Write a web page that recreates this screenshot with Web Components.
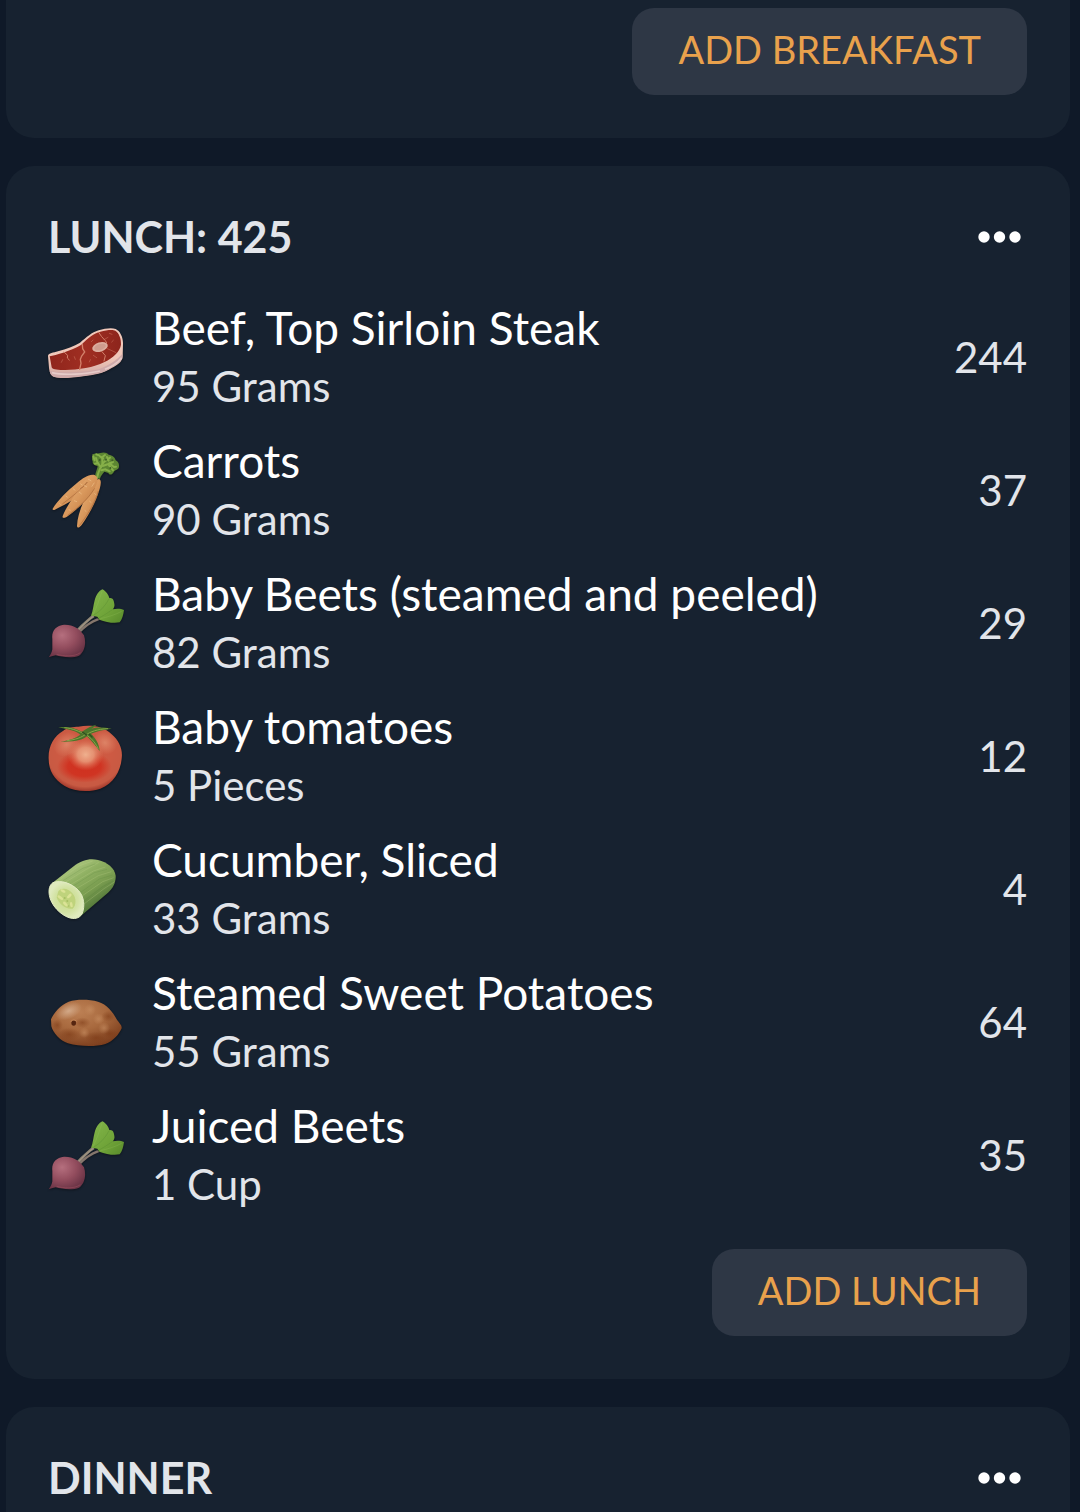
<!DOCTYPE html>
<html lang="en">
<head>
<meta charset="utf-8">
<meta name="viewport" content="width=device-width, initial-scale=1">
<title>Food diary</title>
<style>
    :root {
        --page: #0f1928;
        --card: #172230;
        --button: #2e3745;
        --accent: #e9a14c;
        --text: #ffffff;
        --text-soft: #e2e5ea;
    }
    body {
        margin: 0;
        padding: 0 10px 0 6px;
        background: var(--page);
        color: var(--text);
        font-family: Lato, "Open Sans", sans-serif;
        display: flex;
        flex-direction: column;
        gap: 28px;
    }
</style>
</head>
<body>

<meal-card continued>
    <add-button slot="action">ADD BREAKFAST</add-button>
</meal-card>

<meal-card>
    <span slot="title">LUNCH: 425</span>
    <food-item icon="steak" calories="244">Beef, Top Sirloin Steak<span slot="amount">95 Grams</span></food-item>
    <food-item icon="carrots" calories="37">Carrots<span slot="amount">90 Grams</span></food-item>
    <food-item icon="beet" calories="29">Baby Beets (steamed and peeled)<span slot="amount">82 Grams</span></food-item>
    <food-item icon="tomato" calories="12">Baby tomatoes<span slot="amount">5 Pieces</span></food-item>
    <food-item icon="cucumber" calories="4">Cucumber, Sliced<span slot="amount">33 Grams</span></food-item>
    <food-item icon="potato" calories="64">Steamed Sweet Potatoes<span slot="amount">55 Grams</span></food-item>
    <food-item icon="beet" calories="35">Juiced Beets<span slot="amount">1 Cup</span></food-item>
    <add-button slot="action">ADD LUNCH</add-button>
</meal-card>

<meal-card>
    <span slot="title">DINNER</span>
</meal-card>

<script>
/* ---------- Food drawings, one svg per icon name ---------- */
const icons = {
    steak: `
        <svg viewBox="54 27 228 228">
            <defs>
                <linearGradient id="fat" x1="0" y1="0" x2="0" y2="1"><stop offset=".6" stop-color="#f0c8ba"/><stop offset="1" stop-color="#cfa5a0"/></linearGradient>
                <linearGradient id="meat" x1="0" y1="0" x2="1" y2="0"><stop offset="0" stop-color="#8f251c"/><stop offset=".5" stop-color="#a02e22"/><stop offset="1" stop-color="#8d251c"/></linearGradient>
            </defs>
            <path d="M54 137 C56 130 70 128 84 124 C110 116 132 109 150 98 C170 82 185 67 206 61 C225 55 246 53 257 57 C270 63 280 82 279 102 L278 140 C276 156 262 165 245 174 C222 190 190 195 160 199 C125 204 90 207 73 201 C62 197 59 188 57 174 Z" fill="url(#fat)"/>
            <path d="M59 182 C90 190 165 187 205 178 C235 167 262 150 277 131 L277 144 C270 160 247 170 226 184 C190 197 100 207 76 201 C63 198 60 190 59 182 Z" fill="#d0abab"/>
            <path d="M66 188 C100 197 170 192 210 183 M225 178 C245 170 265 156 275 143" fill="none" stroke="#e6cbc8" stroke-width="5"/>
            <path d="M59 139 C76 135 124 123 154 104 C175 84 191 69 211 65 C230 60 248 58 256 62 C267 69 274 86 273 104 C270 125 249 144 222 157 C192 173 137 181 99 180 C78 180 67 178 65 172 Z" fill="url(#meat)"/>
            <g fill="none" stroke="#d3806a" stroke-linecap="round">
                <path d="M102 126 L113 136 L112 144 L118 150" stroke-width="3"/>
                <path d="M157 104 L158 116 L164 126 L155 138 L151 148 L153 160 L149 178" stroke-width="4"/>
                <path d="M206 67 L215 80 L226 92 L230 98 M216 125 L226 137 L222 153" stroke-width="3"/>
                <path d="M232 116 L250 124 L258 128 M222 89 L234 82 M94 157 L98 149 M178 156 L181 149 M190 136 L200 143 M184 95 L189 90 M133 140 L136 148 M238 70 L246 73 M245 96 L250 91" stroke-width="2" opacity=".7"/>
            </g>
            <ellipse cx="210" cy="111" rx="24" ry="14" transform="rotate(-16 210 111)" fill="#dcae9f"/>
            <ellipse cx="210" cy="111" rx="18" ry="9" transform="rotate(-16 210 111)" fill="#cf9d8f"/>
        </svg>`,
    carrots: `
        <svg viewBox="54 36 228 228">
            <defs>
                <linearGradient id="root" x1="0" y1="0" x2="1" y2="1"><stop offset="0" stop-color="#ecb981"/><stop offset=".5" stop-color="#d9985c"/><stop offset="1" stop-color="#b06a36"/></linearGradient>
            </defs>
            <path d="M196 115 C194 100 201 91 203 79 C194 76 187 73 188 64 C183 57 188 50 187 43 C195 38 204 42 211 39 C220 36 231 37 236 44 C247 45 256 53 257 61 C267 66 269 77 266 84 C262 91 254 89 250 98 C244 106 238 105 235 99 L223 95 C217 102 212 108 210 116 Z" fill="#5c8632"/>
            <g fill="none" stroke="#86b049" stroke-width="6" stroke-linecap="round">
                <path d="M201 114 C205 96 211 79 223 65 L240 53"/>
                <path d="M213 82 L202 67 L198 54 M217 72 L217 51 L225 45 M218 78 L235 72 L249 66 M214 91 L226 88 L239 94"/>
                <path d="M194 61 L190 49 M204 70 L195 71 M207 46 L199 43 M219 55 L210 49 M236 62 L231 51 M238 70 L252 81 L258 80 M237 76 L249 91"/>
            </g>
            <g fill="#3f5f27"><circle cx="209" cy="60" r="3"/><circle cx="228" cy="59" r="3"/><circle cx="241" cy="84" r="3"/><circle cx="247" cy="61" r="3"/></g>
            <path d="M187 104 C173 105 158 114 141 129 C113 151 83 182 68 206 C66 211 73 211 80 206 C111 192 145 171 169 145 C183 128 200 109 187 104 Z" fill="url(#root)"/>
            <path d="M207 117 C193 118 184 137 171 163 C156 194 142 226 141 258 C142 266 149 263 155 255 C172 231 193 195 203 166 C210 145 218 121 207 117 Z" fill="url(#root)"/>
            <path d="M186 106 C170 109 154 135 139 158 C124 179 106 207 98 228 C96 236 104 235 113 229 C143 207 174 179 191 151 C202 131 207 115 197 107 C193 104 190 104 186 106 Z" fill="url(#root)"/>
            <path d="M150 146 C160 142 166 134 172 126 C151 151 121 174 97 192 M194 145 C173 179 142 205 113 226 M205 153 C196 186 171 228 148 257" fill="none" stroke="#8e4e25" stroke-width="2" opacity=".6"/>
            <g fill="none" stroke="#f1cb96" stroke-width="2" opacity=".8">
                <path d="M174 117 L184 123 M162 136 L171 141 M147 156 L155 162 M132 182 L141 185 M116 209 L122 211 M193 128 L185 140 M151 131 L157 135 M129 146 L136 151 M107 168 L113 172 M88 190 L92 194 M193 160 L199 165 M178 183 L184 188 M164 211 L169 215"/>
            </g>
        </svg>`,
    beet: `
        <svg viewBox="54 30 228 228">
            <defs>
                <radialGradient id="bulb" cx=".37" cy=".33" r=".7"><stop offset="0" stop-color="#b56f7e"/><stop offset=".55" stop-color="#934d5e"/><stop offset="1" stop-color="#6b3446"/></radialGradient>
                <linearGradient id="leaf" x1="0" y1="0" x2="1" y2="1"><stop offset="0" stop-color="#83b64b"/><stop offset=".6" stop-color="#6fa338"/><stop offset="1" stop-color="#588a2b"/></linearGradient>
            </defs>
            <path d="M139 164 C156 145 173 131 187 119 L194 126 C178 136 162 152 148 169 Z" fill="#8d8576"/>
            <path d="M143 170 C161 152 181 138 202 130 L208 135 C184 144 165 157 149 175 Z" fill="#85766c"/>
            <path d="M144 166 C158 150 174 136 191 123" fill="none" stroke="#b2a08b" stroke-width="2"/>
            <path d="M183 122 C189 108 190 91 194 76 C198 60 207 47 217 43 C225 47 235 57 238 69 C249 67 252 77 253 86 C255 94 251 99 249 103 C260 100 274 101 282 105 C280 119 277 133 269 142 C250 146 228 141 208 134 L202 125 L190 123 Z" fill="url(#leaf)"/>
            <path d="M190 121 C210 110 226 93 238 70 M205 130 C224 121 238 109 249 103" fill="none" stroke="#4f8030" stroke-width="3" opacity=".3"/>
            <path d="M189 119 C200 97 209 71 216 49 M211 131 C233 126 257 119 275 109" fill="none" stroke="#9cc765" stroke-width="2" opacity=".35"/>
            <path d="M67 192 C64 169 77 151 102 149 C129 148 150 161 162 181 C170 205 163 231 147 242 C128 251 94 246 77 241 C69 242 61 246 56 247 C62 239 66 231 67 223 Z" fill="url(#bulb)"/>
            <path d="M151 233 C133 246 101 244 80 238" fill="none" stroke="#a45161" stroke-width="3" opacity=".5"/>
        </svg>`,
    tomato: `
        <svg viewBox="54 24 228 228">
            <defs>
                <radialGradient id="skin" cx=".5" cy=".42" r=".6"><stop offset="0" stop-color="#cf5a42"/><stop offset=".6" stop-color="#cd5a43"/><stop offset=".85" stop-color="#c85a43"/><stop offset="1" stop-color="#962f25"/></radialGradient>
                <radialGradient id="shade"><stop offset="0" stop-color="#d0301f"/><stop offset=".6" stop-color="#d0301f" stop-opacity=".9"/><stop offset="1" stop-color="#d0301f" stop-opacity="0"/></radialGradient>
                <radialGradient id="glow"><stop offset="0" stop-color="#efb08e"/><stop offset=".45" stop-color="#e99d7c" stop-opacity=".85"/><stop offset="1" stop-color="#df7a5c" stop-opacity="0"/></radialGradient>
                <radialGradient id="side"><stop offset="0" stop-color="#e08a6c" stop-opacity=".85"/><stop offset="1" stop-color="#e08a6c" stop-opacity="0"/></radialGradient>
            </defs>
            <path d="M145 50 C183 43 221 49 244 72 C268 91 279 119 275 146 C271 186 250 220 211 236 C178 248 132 245 104 228 C73 210 56 181 56 147 C54 111 70 79 100 62 C113 52 130 50 145 50 Z" fill="url(#skin)"/>
            <ellipse cx="110" cy="103" rx="42" ry="34" transform="rotate(-40 110 103)" fill="url(#side)"/>
            <ellipse cx="225" cy="98" rx="38" ry="34" transform="rotate(40 225 98)" fill="url(#side)"/>
            <ellipse cx="163" cy="170" rx="82" ry="48" fill="url(#shade)"/>
            <ellipse cx="167" cy="134" rx="54" ry="48" fill="url(#glow)"/>
            <path d="M85 52 C109 48 136 53 156 65 C172 54 184 47 199 44 C195 50 188 53 183 57 C201 50 222 52 245 56 C219 59 199 64 183 71 C196 83 208 102 209 123 C195 106 184 91 171 79 C161 88 136 97 91 95 C119 91 139 83 151 74 C137 62 113 58 85 52 Z" fill="#4b752a"/>
            <path d="M103 53 C127 54 151 66 169 74 C180 66 202 57 234 56 M171 76 C188 87 199 104 205 116 M111 92 C137 89 155 82 167 73" fill="none" stroke="#87a448" stroke-width="3"/>
            <path d="M158 67 L170 75 M178 73 L186 81" stroke="#2c4f20" stroke-width="4" stroke-linecap="round"/>
        </svg>`,
    cucumber: `
        <svg viewBox="54 18 228 228">
            <defs>
                <linearGradient id="peel" gradientUnits="userSpaceOnUse" x1="125" y1="64" x2="202" y2="178"><stop offset="0" stop-color="#a9c47c"/><stop offset=".3" stop-color="#8fb062"/><stop offset=".65" stop-color="#7a9d50"/><stop offset="1" stop-color="#54793a"/></linearGradient>
                <radialGradient id="flesh"><stop offset="0" stop-color="#c9db8c"/><stop offset=".65" stop-color="#d2e2a2"/><stop offset="1" stop-color="#dfeabd"/></radialGradient>
            </defs>
            <path d="M67 114 L129 65 C158 43 181 40 204 45 C232 52 254 69 257 92 C258 112 249 129 234 143 L148 217 Z" fill="url(#peel)"/>
            <g fill="none" stroke="#c0d38d" stroke-width="3" opacity=".25">
                <path d="M82 109 L149 62 L188 48 M104 113 L164 76 L207 52 M120 120 L190 78 L226 66 M139 131 L205 92 L244 80 M153 155 L218 110 L251 98 M158 180 L222 131 L253 111"/>
            </g>
            <g fill="none" stroke="#44712f" stroke-width="3" opacity=".15">
                <path d="M99 107 L158 70 L196 57 M125 126 L193 83 L231 73 M148 145 L208 102 L248 90 M160 169 L219 124 L249 108"/>
            </g>
            <path d="M69 113 C92 104 124 114 145 136 C162 154 166 183 156 207 C147 221 133 223 117 218 C92 210 63 181 58 151 C55 133 59 119 69 113 Z" fill="url(#flesh)" stroke="#e3ecc4" stroke-width="3"/>
            <path d="M85 139 C96 125 117 132 127 145 C140 157 139 183 128 191 C109 195 86 177 80 157 Z" fill="#bfd37c"/>
            <g fill="#dbe396"><ellipse cx="99" cy="138" rx="8" ry="4" transform="rotate(25 99 138)"/><ellipse cx="91" cy="158" rx="10" ry="4" transform="rotate(35 91 158)"/><ellipse cx="118" cy="153" rx="9" ry="4" transform="rotate(-45 118 153)"/><ellipse cx="106" cy="177" rx="9" ry="4" transform="rotate(45 106 177)"/><ellipse cx="124" cy="179" rx="8" ry="4" transform="rotate(80 124 179)"/></g>
            <g fill="#a5bd62"><circle cx="104" cy="159" r="3"/><circle cx="112" cy="168" r="3"/><circle cx="116" cy="183" r="2"/></g>
        </svg>`,
    potato: `
        <svg viewBox="54 -3 228 228">
            <defs>
                <radialGradient id="potato" cx=".4" cy=".26" r=".78"><stop offset="0" stop-color="#bc8054"/><stop offset=".5" stop-color="#a8693e"/><stop offset="1" stop-color="#7b3d1c"/></radialGradient>
                <radialGradient id="shine"><stop offset="0" stop-color="#d6ae8e" stop-opacity=".9"/><stop offset="1" stop-color="#d6ae8e" stop-opacity="0"/></radialGradient>
                <radialGradient id="blot"><stop offset="0" stop-color="#7b3814" stop-opacity=".55"/><stop offset="1" stop-color="#7b3814" stop-opacity="0"/></radialGradient>
                <radialGradient id="patch"><stop offset="0" stop-color="#c99063" stop-opacity=".6"/><stop offset="1" stop-color="#c99063" stop-opacity="0"/></radialGradient>
            </defs>
            <path d="M63 103 C72 82 91 60 116 50 C142 42 177 43 204 50 C231 58 248 80 260 103 C267 114 276 120 275 130 C267 148 250 169 226 177 C193 187 146 184 114 175 C90 167 69 144 64 124 Z" fill="url(#potato)"/>
            <ellipse cx="116" cy="78" rx="42" ry="24" transform="rotate(-24 116 78)" fill="url(#shine)"/>
            <g fill="url(#blot)"><ellipse cx="157" cy="113" rx="25" ry="16"/><ellipse cx="198" cy="158" rx="34" ry="18"/><ellipse cx="118" cy="148" rx="32" ry="20"/><ellipse cx="235" cy="94" rx="21" ry="17"/><ellipse cx="82" cy="120" rx="17" ry="18"/><ellipse cx="240" cy="146" rx="24" ry="15"/></g>
            <g fill="url(#patch)"><circle cx="180" cy="74" r="18"/><circle cx="206" cy="102" r="17"/><circle cx="222" cy="129" r="18"/><circle cx="163" cy="143" r="16"/></g>
            <ellipse cx="131" cy="114" rx="7" ry="8" fill="#552510"/>
            <path d="M122 111 C125 104 135 103 140 109" fill="none" stroke="#ca8a5b" stroke-width="3"/>
        </svg>`
};

/* ---------- food-icon: a decorative drawing chosen by name ---------- */
class FoodIcon extends HTMLElement {
  constructor() {
    super();
    this.attachShadow({ mode: 'open' });
  }

  static get observedAttributes() {
    return ['name'];
  }

  attributeChangedCallback(name, oldVal, newVal) {
    this.shadowRoot.innerHTML = `
        <style>
            :host { display: block; width: 76px; height: 76px; flex: none; }
            svg { display: block; width: 100%; height: 100%; overflow: visible; filter: drop-shadow(0 1px 1px rgba(0,0,0,0.4)); }
        </style>
        ${icons[newVal] || ''}
    `;
  }
}

/* ---------- food-item: icon, name over amount, calories ---------- */
const itemTemplate = document.createElement('template');
itemTemplate.innerHTML = `
    <style>
        :host {
            display: flex;
            align-items: center;
            gap: 28px;
            line-height: 58px;
        }
        .label {
            flex: 1;
            min-width: 0;
        }
        .name {
            font-size: 46px;
        }
        .amount {
            font-size: 42px;
            color: var(--text-soft);
        }
        .calories {
            font-size: 42px;
            color: var(--text-soft);
        }
    </style>
    <food-icon aria-hidden="true"></food-icon>
    <div class="label">
        <div class="name"><slot></slot></div>
        <div class="amount"><slot name="amount"></slot></div>
    </div>
    <div class="calories"></div>
`;

class FoodItem extends HTMLElement {
  constructor() {
    super();
    this.attachShadow({ mode: 'open' });
    this.shadowRoot.appendChild(itemTemplate.content.cloneNode(true));
  }

  connectedCallback() {
    this.setAttribute('role', 'listitem');
    this.shadowRoot.querySelector('food-icon').setAttribute('name', this.getAttribute('icon'));
    this.shadowRoot.querySelector('.calories').textContent = this.getAttribute('calories');
  }
}

/* ---------- add-button ---------- */
const addTemplate = document.createElement('template');
addTemplate.innerHTML = `
    <style>
        :host { display: block; }
        button {
            display: block;
            margin: 0;
            padding: 15px 46px 20px;
            border: 0;
            border-radius: 22px;
            background: var(--button);
            color: var(--accent);
            font: inherit;
            font-size: 38px;
            line-height: 52px;
            cursor: pointer;
        }
    </style>
    <button type="button"><slot></slot></button>
`;

class AddButton extends HTMLElement {
  constructor() {
    super();
    this.attachShadow({ mode: 'open' });
    this.shadowRoot.appendChild(addTemplate.content.cloneNode(true));
  }
}

/* ---------- more-button: three dots ---------- */
const moreTemplate = document.createElement('template');
moreTemplate.innerHTML = `
    <style>
        :host { display: block; }
        button {
            display: block;
            margin: 0;
            padding: 20px 6px;
            border: 0;
            background: none;
            color: inherit;
            cursor: pointer;
        }
        svg { display: block; }
    </style>
    <button type="button" aria-label="More options">
        <svg width="43" height="12" viewBox="0 0 43 12" fill="currentColor">
            <circle cx="6" cy="6" r="5.7"/><circle cx="21.5" cy="6" r="5.7"/><circle cx="37" cy="6" r="5.7"/>
        </svg>
    </button>
`;

class MoreButton extends HTMLElement {
  constructor() {
    super();
    this.attachShadow({ mode: 'open' });
    this.shadowRoot.appendChild(moreTemplate.content.cloneNode(true));
  }
}

/* ---------- meal-card: header, list of foods, action ---------- */
const cardTemplate = document.createElement('template');
cardTemplate.innerHTML = `
    <style>
        :host {
            display: flex;
            flex-direction: column;
            gap: 36px;
            padding: 44px 43px 43px 42px;
            border-radius: 28px;
            background: var(--card);
        }
        header {
            display: flex;
            align-items: center;
            justify-content: space-between;
        }
        h2 {
            margin: 0;
            font-size: 43px;
            font-weight: 700;
            line-height: 53px;
            color: var(--text-soft);
        }
        .items {
            display: flex;
            flex-direction: column;
            gap: 17px;
        }
        .action {
            display: flex;
            justify-content: flex-end;
        }
        /* the tail of a card that began further up */
        :host([continued]) {
            padding-top: 8px;
            border-radius: 0 0 28px 28px;
        }
        :host([continued]) header,
        .items[hidden],
        .action[hidden] {
            display: none;
        }
    </style>
    <header>
        <h2><slot name="title"></slot></h2>
        <more-button></more-button>
    </header>
    <div class="items" role="list"><slot></slot></div>
    <div class="action"><slot name="action"></slot></div>
`;

class MealCard extends HTMLElement {
  constructor() {
    super();
    this.attachShadow({ mode: 'open' });
    this.shadowRoot.appendChild(cardTemplate.content.cloneNode(true));
  }

  connectedCallback() {
    /** Leave out the parts this meal has nothing for */
    this.shadowRoot.querySelector('.items').hidden = !this.querySelector('food-item');
    this.shadowRoot.querySelector('.action').hidden = !this.querySelector('[slot="action"]');
  }
}

window.customElements.define('food-icon', FoodIcon);
window.customElements.define('food-item', FoodItem);
window.customElements.define('add-button', AddButton);
window.customElements.define('more-button', MoreButton);
window.customElements.define('meal-card', MealCard);
</script>
</body>
</html>
